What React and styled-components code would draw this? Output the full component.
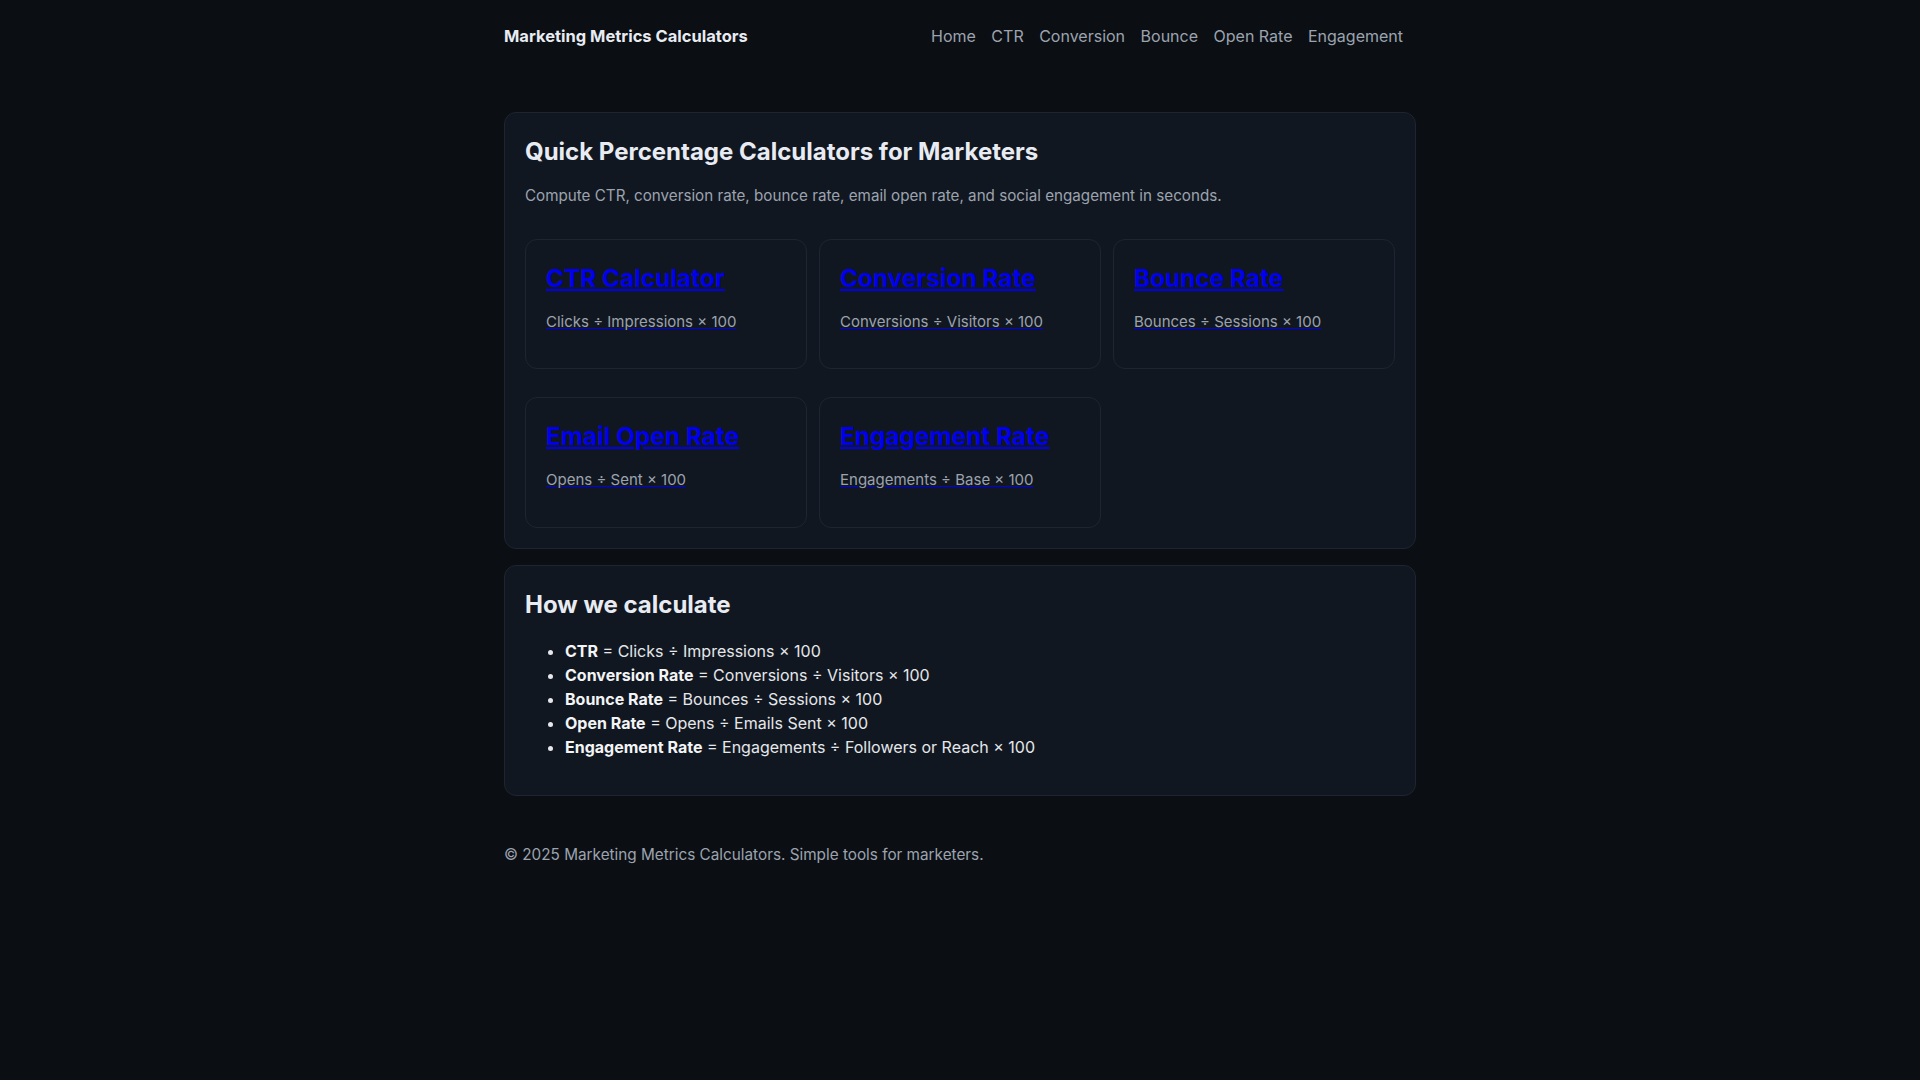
import styled, { createGlobalStyle } from 'styled-components'

const GlobalStyle = createGlobalStyle`
  *, *::before, *::after {
    box-sizing: border-box;
  }
  html, body {
    margin: 0;
    background: #0b0f14;
    color: #e5e7eb;
    font-family: Inter, "Noto Sans", "Liberation Sans", sans-serif;
    font-size: 16px;
    line-height: 1.5;
  }
`

const Wrapper = styled.div`
  max-width: 960px;
  margin: 0 auto;
  padding: 0 24px;
`

const Header = styled.header`
  display: flex;
  justify-content: space-between;
  align-items: center;
  height: 72px;
  line-height: 24px;
`

const Brand = styled.a`
  font-size: 16.5px;
  font-weight: 700;
  color: #e8ecf2;
  text-decoration: none;
`

const Nav = styled.nav`
  display: flex;
  gap: 15.5px;
  padding-right: 13px;
`

const NavLink = styled.a`
  font-size: 16px;
  color: #9ca3af;
  text-decoration: none;
`

const Main = styled.main`
  display: flex;
  flex-direction: column;
  gap: 16px;
  padding-top: 40px;
`

const Panel = styled.section`
  background: #111720;
  border: 1px solid #1e2530;
  border-radius: 12px;
  padding: 21px 20px 20px;
`

const PanelTitle = styled.h2`
  margin: 0;
  font-size: 24px;
  font-weight: 700;
  line-height: 36px;
  color: #e8ecf2;
`

const Lead = styled.p`
  margin: 15px 0 0;
  font-size: 15.2px;
  color: #9ca3af;
`

const CardGrid = styled.div`
  display: grid;
  grid-template-columns: repeat(3, 1fr);
  column-gap: 12px;
  row-gap: 28px;
  margin-top: 31px;
`

const CalcCard = styled.a`
  display: block;
  border: 1px solid #1e2530;
  border-radius: 12px;
  padding: 20px;
  color: #0000ee;
`

const CardTitle = styled.h3`
  margin: 0;
  font-size: 24.4px;
  font-weight: 700;
  line-height: 36px;
`

const Formula = styled.p`
  margin: 15px 0;
  font-size: 15px;
  color: #9ca3af;
`

const FormulaList = styled.ul`
  margin: 16px 0;
  padding-left: 40px;
  color: #e5e7eb;

  strong {
    color: #f3f4f6;
    font-weight: 700;
  }
`

const Footer = styled.footer`
  padding: 48px 0 40px;
  font-size: 15.3px;
  color: #9ca3af;
`

const calculators = [
  { title: 'CTR Calculator', formula: 'Clicks ÷ Impressions × 100' },
  { title: 'Conversion Rate', formula: 'Conversions ÷ Visitors × 100' },
  { title: 'Bounce Rate', formula: 'Bounces ÷ Sessions × 100' },
  { title: 'Email Open Rate', formula: 'Opens ÷ Sent × 100' },
  { title: 'Engagement Rate', formula: 'Engagements ÷ Base × 100' },
]

const definitions = [
  ['CTR', 'Clicks ÷ Impressions × 100'],
  ['Conversion Rate', 'Conversions ÷ Visitors × 100'],
  ['Bounce Rate', 'Bounces ÷ Sessions × 100'],
  ['Open Rate', 'Opens ÷ Emails Sent × 100'],
  ['Engagement Rate', 'Engagements ÷ Followers or Reach × 100'],
]

const navItems = ['Home', 'CTR', 'Conversion', 'Bounce', 'Open Rate', 'Engagement']

function App() {
  return (
    <>
      <GlobalStyle />
      <Wrapper>
        <Header>
          <Brand href="#">Marketing Metrics Calculators</Brand>
          <Nav aria-label="Main navigation">
            {navItems.map((item) => (
              <NavLink key={item} href="#">
                {item}
              </NavLink>
            ))}
          </Nav>
        </Header>
        <Main>
          <Panel>
            <PanelTitle>Quick Percentage Calculators for Marketers</PanelTitle>
            <Lead>
              Compute CTR, conversion rate, bounce rate, email open rate, and
              social engagement in seconds.
            </Lead>
            <CardGrid>
              {calculators.map((calc) => (
                <CalcCard key={calc.title} href="#">
                  <CardTitle>{calc.title}</CardTitle>
                  <Formula>{calc.formula}</Formula>
                </CalcCard>
              ))}
            </CardGrid>
          </Panel>
          <Panel>
            <PanelTitle>How we calculate</PanelTitle>
            <FormulaList>
              {definitions.map(([name, formula]) => (
                <li key={name}>
                  <strong>{name}</strong> = {formula}
                </li>
              ))}
            </FormulaList>
          </Panel>
        </Main>
        <Footer>© 2025 Marketing Metrics Calculators. Simple tools for marketers.</Footer>
      </Wrapper>
    </>
  )
}

export default App
